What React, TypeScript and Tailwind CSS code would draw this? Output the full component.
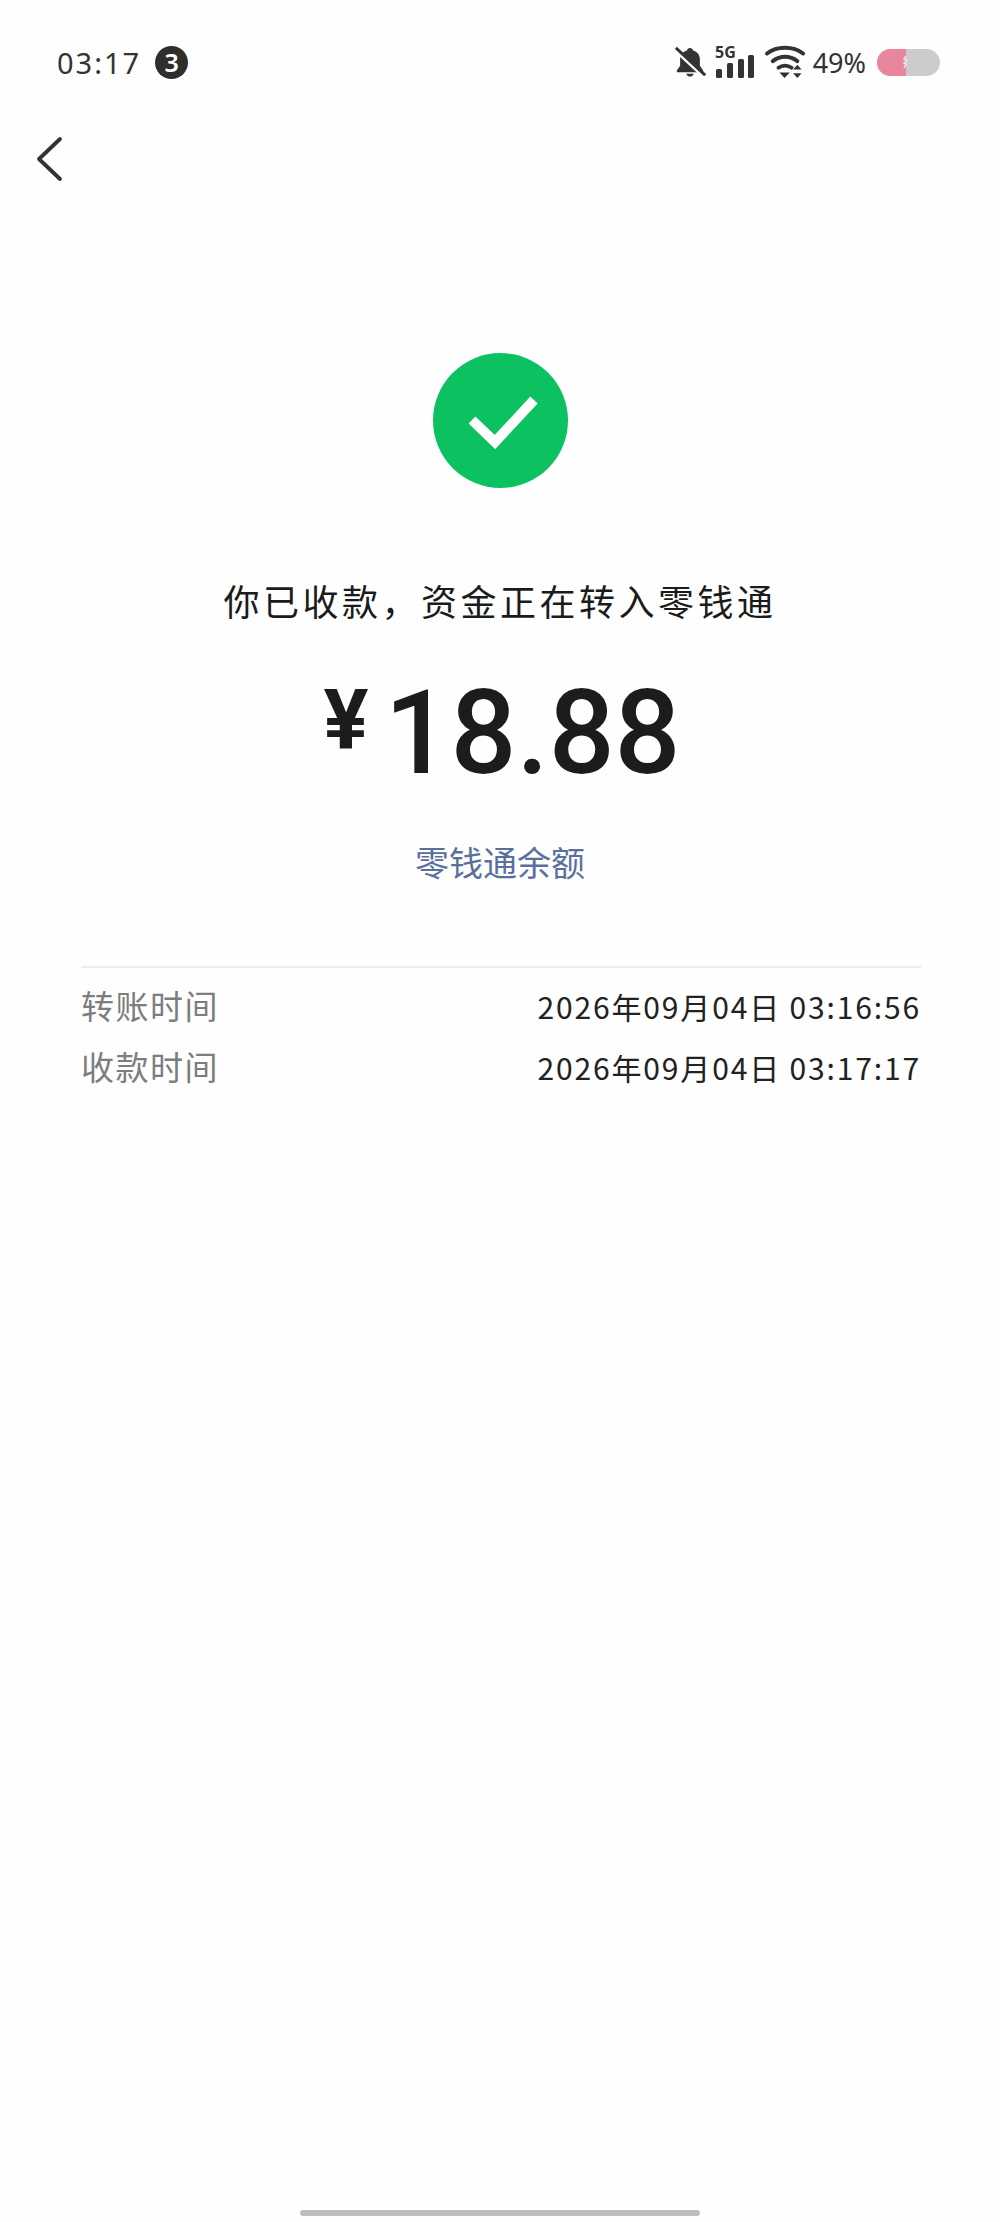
const cjk = "font-['Noto_Sans_CJK_SC','Noto_Sans',sans-serif]";

function Status() {
  return (
    <div className="flex h-[122px] items-center justify-between pl-[57px] pr-[60px] pt-[2px]">
      <div className="flex items-center gap-[14px]">
        <span className="text-[29px] leading-none tracking-[2px] text-[#333] font-['Noto_Sans',sans-serif]">03:17</span>
        <span className="flex h-[33px] w-[33px] items-center justify-center rounded-full bg-[#2e2e2e] text-[25px] font-semibold leading-none text-white font-['Noto_Sans',sans-serif]">3</span>
      </div>
      <div className="flex items-center">
        <svg width="32" height="34" viewBox="0 0 34 34" className="mr-[9px]">
          <path d="M17 2c-1.800 0-3 1.200-3.200 2.800C9 6 6.500 10 6.500 14v7L3 26v2h28v-2l-3.500-5v-7c0-4-2.500-8-7.300-9.200C20 3.200 18.800 2 17 2zM13 29.500c.5 2 2 3 4 3s3.500-1 4-3z" fill="#333" />
          <path d="M2 4l30 28" stroke="#fff" strokeWidth="5" />
          <path d="M2 2l31 29" stroke="#333" strokeWidth="3" />
        </svg>
        <svg width="40" height="32" viewBox="0 0 40 32" className="mr-[10px] overflow-visible">
          <text x="0" y="12" fontSize="16" fontWeight="700" fill="#333" fontFamily="Noto Sans">5G</text>
          <rect x="1" y="23" width="6" height="9" rx="1.500" fill="#333" />
          <rect x="12" y="17" width="6" height="15" rx="1.500" fill="#333" />
          <rect x="23" y="13" width="6" height="19" rx="1.500" fill="#333" />
          <rect x="33" y="9" width="6" height="23" rx="1.500" fill="#333" />
        </svg>
        <svg width="42" height="34" viewBox="0 0 44 36" className="mr-[6px]">
          <path d="M2 9C12 1 30 1 40 9" fill="none" stroke="#333" strokeWidth="4.200" strokeLinecap="round" />
          <path d="M8 17c8-6 18-6 26 0" fill="none" stroke="#333" strokeWidth="4.200" strokeLinecap="round" />
          <path d="M14 24c4-3 10-3 14 0" fill="none" stroke="#333" strokeWidth="4" strokeLinecap="round" />
          <path d="M15 29h11l-5.500 6z" fill="#333" />
          <path d="M34 21l4.500 5h-9zM34 35l-4.500-5h9z" fill="#333" />
        </svg>
        <span className="mr-[11px] text-[27px] leading-none text-[#333] font-['Noto_Sans',sans-serif]">49%</span>
        <div className="relative flex h-[27px] w-[63px] overflow-hidden rounded-full bg-[#cccccc]">
          <div className="h-full w-[29px] bg-[#e8879c]" />
          <svg width="8" height="27" viewBox="0 0 8 27" className="absolute left-[25px] top-0">
            <path d="M4 7l-2 3 3 1-3 3 2 1-2 4" fill="none" stroke="#f6e4e8" strokeWidth="1.500" />
          </svg>
        </div>
      </div>
    </div>
  );
}

function Row({ label, value }: { label: string; value: string }) {
  return (
    <div className="flex h-[61px] items-center justify-between">
      <span className="text-[33px] leading-none tracking-[1.500px] text-[#7d7d7d]">{label}</span>
      <span className="text-[30px] leading-none tracking-[1.850px] text-[#222]">{value}</span>
    </div>
  );
}

export default function App() {
  return (
    <div className={`flex h-[2222px] w-[1000px] flex-col overflow-hidden bg-[#fefefe] ${cjk}`}>
      <Status />
      <div className="flex h-[231px] items-start pl-[35px] pt-[14px]">
        <svg width="28" height="46" viewBox="0 0 28 46">
          <path d="M25 3L4 23l21 20" fill="none" stroke="#333" strokeWidth="3.800" strokeLinecap="round" strokeLinejoin="round" />
        </svg>
      </div>
      <div className="flex flex-col items-center">
        <div className="flex h-[135px] w-[135px] items-center justify-center rounded-full bg-[#0bc160]">
          <svg width="70" height="56" viewBox="0 0 70 56" className="ml-[5px]">
            <path d="M4 27l23 22L66 7" fill="none" stroke="#fff" strokeWidth="10" />
          </svg>
        </div>
        <div className="mt-[87px] text-[36px] leading-[50px] tracking-[3.500px] text-[#1b1b1b]">你已收款，资金正在转入零钱通</div>
        <div className="mt-[48px] ml-[4px] flex h-[120px] items-center font-['Roboto',sans-serif] leading-none text-[#1c1c1c]">
          <span className="mr-[16px] mb-[24px] text-[84px] font-bold">¥</span>
          <span className="text-[116px] font-medium">18.88</span>
        </div>
        <div className="mt-[47px] text-[34px] leading-[44px] text-[#5a6f9c]">零钱通余额</div>
      </div>
      <div className="ml-[81px] mr-[79px] mt-[82px] h-[2px] bg-[#ececec]" />
      <div className="ml-[81px] mr-[79px] mt-[7px] flex flex-col">
        <Row label="转账时间" value="2026年09月04日 03:16:56" />
        <Row label="收款时间" value="2026年09月04日 03:17:17" />
      </div>
      <div className="mt-auto mb-[6px] h-[6px] w-[400px] self-center rounded-full bg-[#bdbdbd]" />
    </div>
  );
}
